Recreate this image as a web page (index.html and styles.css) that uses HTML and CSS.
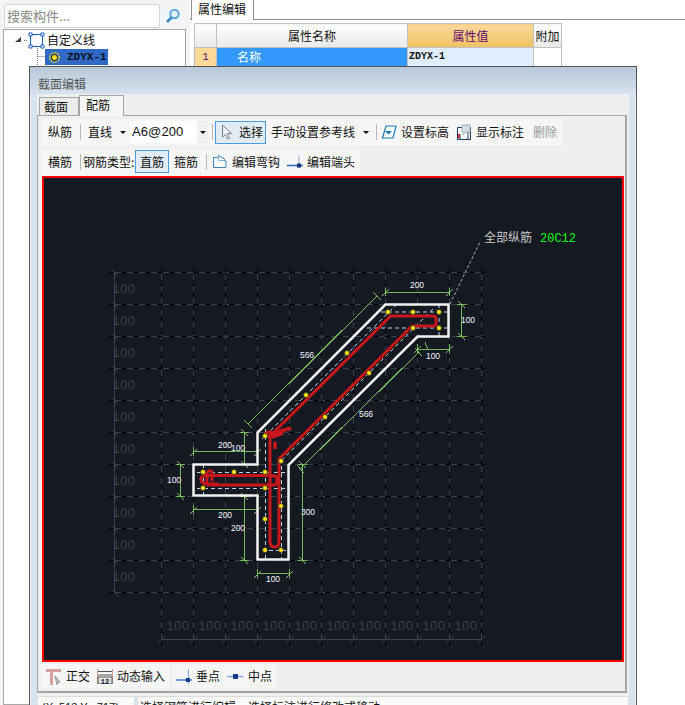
FILE: index.html
```html
<!DOCTYPE html>
<html lang="zh">
<head>
<meta charset="utf-8">
<title>截面编辑</title>
<link rel="stylesheet" href="styles.css">
</head>
<body>
<div class="app">
  <aside class="left">
    <div class="search">
      <div class="search-input">搜索构件...</div>
      <svg class="search-icon" width="16" height="16" viewBox="0 0 16 16"><circle cx="9.5" cy="6" r="4.2" fill="#e4f2fb" stroke="#5ba6d6" stroke-width="2"/><path d="M6.5 9.5L2 14" stroke="#3d8dc4" stroke-width="2.6"/></svg>
    </div>
    <div class="tree">
      <div class="tree-root">
        <svg class="tree-svg" width="44" height="40" viewBox="0 0 44 40">
          <path d="M17 6l-6 5h6z" fill="#444"/>
          <path d="M20 9.500h4M33.500 15v23M33.500 25.500h7" stroke="#777" stroke-dasharray="1 1" fill="none"/>
          <rect x="26.500" y="3.500" width="12" height="12" fill="none" stroke="#1d5fc0"/>
          <path d="M25 2h3v3h-3zM37 2h3v3h-3zM25 14h3v3h-3zM37 14h3v3h-3z" fill="#fff" stroke="#1d5fc0"/>
        </svg>
        <span>自定义线</span>
      </div>
      <div class="tree-item">
        <svg width="11" height="11" viewBox="0 0 11 11"><circle cx="5.500" cy="5.500" r="3" fill="#ffe600" stroke="#222" stroke-width="1"/><circle cx="5.500" cy="5.500" r="4.800" fill="none" stroke="#ffe600" stroke-width="1.300" stroke-dasharray="1.500 1"/></svg>
        <span>ZDYX-1</span>
      </div>
    </div>
  </aside>
  <main class="right">
    <div class="tabbar"><div class="main-tab">属性编辑</div></div>
    <table class="props">
      <colgroup><col class="c1"><col class="c2"><col class="c3"><col class="c4"></colgroup>
      <tr class="head"><th></th><th>属性名称</th><th class="active">属性值</th><th>附加</th></tr>
      <tr class="row"><td class="num">1</td><td class="name">名称</td><td class="val">ZDYX-1</td><td></td></tr>
    </table>
  </main>
</div>

<section class="dialog">
  <div class="title">截面编辑</div>
  <div class="client">
    <div class="tabs">
      <div class="tab">截面</div>
      <div class="tab on">配筋</div>
    </div>
    <div class="pane">
      <div class="tb tb1">
        <span class="t w-a">纵筋</span><i class="sep"></i>
        <span class="t">直线</span><i class="arrow"></i>
        <div class="combo"><span>A6@200</span><b><i class="arrow"></i></b></div>
        <i class="sep s2"></i>
        <div class="btn sel">
          <svg width="12" height="17" viewBox="0 0 12 17"><path d="M1.500 1v12l3-2.500 2 4.500 2-1-2-4.500h4z" fill="#eef1f4" stroke="#7a8088"/></svg>
          <span>选择</span>
        </div>
        <span class="t m5">手动设置参考线</span><i class="arrow a2"></i><i class="sep s3"></i>
        <svg class="ic m4" width="16" height="14" viewBox="0 0 16 14"><path d="M5 1h10l-3 12H1.500z" fill="#fff" stroke="#1c78b8" stroke-width="1.200"/><path d="M4 6h7l-3.500 3.500z" fill="#1c78b8"/></svg>
        <span class="t m4">设置标高</span>
        <svg class="ic m8" width="15" height="16" viewBox="0 0 15 16"><path d="M.500 3.500h13v12H.500z" fill="#fff" stroke="#1d3a5f"/><path d="M5 1h8v7H9l-3 3V8H5z" fill="#d5dde5" stroke="#a9b3bd"/><path d="M3 10v5M11 8v7" stroke="#1d3a5f"/><path d="M1 10h2v4H1z" fill="#d6301f"/></svg>
        <span class="t m4">显示标注</span>
        <span class="t gray">删除</span>
      </div>
      <div class="tb tb2">
        <span class="t w-a">横筋</span><i class="sep"></i>
        <span class="t type">钢筋类型:</span>
        <div class="btn straight"><span>直筋</span></div>
        <span class="t m5">箍筋</span><i class="sep s4"></i>
        <svg class="ic m5" width="15" height="15" viewBox="0 0 15 15"><path d="M1.500 3.500h5v-2l6 3.500v2h1.500v6.500h-12.500z" fill="#fff" stroke="#3e86bb"/><path d="M6.500 1.500v5h6" fill="none" stroke="#7fb2d6"/></svg>
        <span class="t m5">编辑弯钩</span>
        <svg class="ic m7" width="16" height="14" viewBox="0 0 16 14"><path d="M0 10.500h16" stroke="#2f6fc0" stroke-width="1.600"/><path d="M12 0v13" stroke="#8fb2d9"/><rect x="10" y="8.500" width="4" height="4" fill="#18327f"/></svg>
        <span class="t m4">编辑端头</span>
      </div>

      <div class="canvas">
        <svg class="draw" width="578" height="482" viewBox="44 177 578 482">
          <path class="grid" d="M109 271.500H485M109 303.500H485M109 335.500H485M109 367.500H485M109 399.500H485M109 431.500H485M109 463.500H485M109 495.500H485M109 527.500H485M109 559.500H485M109 591.500H485M161.500 267V644M193.500 267V644M225.500 267V644M257.500 267V644M289.500 267V644M321.500 267V644M353.500 267V644M385.500 267V644M417.500 267V644M449.500 267V644M481.500 267V644"/>
          <path class="grid-dash" d="M109 271.500H485M109 303.500H485M109 335.500H485M109 367.500H485M109 399.500H485M109 431.500H485M109 463.500H485M109 495.500H485M109 527.500H485M109 559.500H485M109 591.500H485M161.500 267V644M193.500 267V644M225.500 267V644M257.500 267V644M289.500 267V644M321.500 267V644M353.500 267V644M385.500 267V644M417.500 267V644M449.500 267V644M481.500 267V644"/>
          <path class="axis" d="M114.500 271V591M161 638.500H481M111 268l7 7M111 300l7 7M111 332l7 7M111 364l7 7M111 396l7 7M111 428l7 7M111 460l7 7M111 492l7 7M111 524l7 7M111 556l7 7M111 588l7 7M158 642l7-7M190 642l7-7M222 642l7-7M254 642l7-7M286 642l7-7M318 642l7-7M350 642l7-7M382 642l7-7M414 642l7-7M446 642l7-7M478 642l7-7"/>
          <g class="faint">
            <text x="124" y="292">100</text><text x="124" y="324">100</text><text x="124" y="356">100</text><text x="124" y="388">100</text><text x="124" y="420">100</text><text x="124" y="452">100</text><text x="124" y="484">100</text><text x="124" y="516">100</text><text x="124" y="548">100</text><text x="124" y="580">100</text>
            <text x="178" y="629">100</text><text x="210" y="629">100</text><text x="242" y="629">100</text><text x="274" y="629">100</text><text x="306" y="629">100</text><text x="338" y="629">100</text><text x="370" y="629">100</text><text x="402" y="629">100</text><text x="434" y="629">100</text><text x="466" y="629">100</text>
          </g>

          <path class="leader" d="M450 303L480 241"/>
          <text class="note" x="484" y="241">全部纵筋</text>
          <text class="note-g" x="540" y="241">20C12</text>

          <path class="dim" d="M385.500 291.500H449.500M385.500 287v8M449.500 287v8M382 295l7-7M446 295l7-7
            M461.500 303.500V335.500M457 303.500h9M457 335.500h9M458 300l7 7M458 332l7 7
            M417.500 348.500H449.500M417.500 343v9M449.500 343v9M414 352l7-7M446 352l7-7M425 341l3 8
            M377 295L248 423M373 291l8 8M244 419l8 8
            M419 351L300 468M415 347l7 8M297 464l7 8
            M193.500 450.500H257.500M193.500 446v9M257.500 446v9M190 455l7-7M254 455l7-7
            M244.500 431.500V463.500M240 431.500h9M240 463.500h9M241 428l7 7M241 460l7 7
            M180.500 463.500V495.500M176 463.500h9M176 495.500h9M177 460l7 7M177 492l7 7
            M193.500 508.500H257.500M193.500 504v9M257.500 504v9M190 513l7-7M254 513l7-7
            M244.500 495.500V559.500M240 495.500h9M240 559.500h9M241 492l7 7M241 556l7 7
            M302.500 463.500V559.500M298 463.500h9M298 559.500h9M299 460l7 7M299 556l7 7
            M257.500 572.500H289.500M257.500 568v9M289.500 568v9M254 577l7-7M286 577l7-7"/>
          <g class="dimtxt">
            <text x="417" y="287">200</text><text x="468" y="322">100</text><text x="433" y="358">100</text>
            <text x="307" y="357">566</text><text x="366" y="416">566</text>
            <text x="225" y="447">200</text><text x="238" y="450">100</text><text x="174" y="482">100</text>
            <text x="225" y="517">200</text><text x="238" y="530">200</text><text x="308" y="514">300</text><text x="273" y="581">100</text>
          </g>

          <path class="cover" d="M397 303L262 438M433 308L279 462M381 311H449M367 327H449M439 303V335M265.500 428V559M281.500 458V559M262 549.500H286M197 471.500H290M197 487.500H290M203.500 463V495"/>
          <path class="outline" d="M385.500 303.500H448.500V335.500H417.500L288.500 464V558.500H257.500V494.500H193.500V463.500H257.500V431.500Z"/>
          <path class="rebar" d="M268 437L390.500 315H433Q436 315 436 318V323Q436 325 433 325H412L279 458V540Q279 546 275 546Q270 546 270 540V430
            M203 474.500H273Q277 475 277 479Q277 484 273 484H212Q206 484 202 481Q199 478 203 475
            M207 484V472Q209 468 212 471V480"/>
          <path class="rebar-thick" d="M209 483H218M266 435Q265 431 270 431Q275 432 272 437M272 436L283 432M275 441V448M271 433L291 427"/>
          <g class="pts">
            <circle cx="388" cy="311" r="2.500"/><circle cx="413" cy="311" r="2.500"/><circle cx="439" cy="311" r="2.500"/><circle cx="413" cy="327" r="2.500"/><circle cx="439" cy="327" r="2.500"/><circle cx="347" cy="352" r="2.500"/><circle cx="369" cy="372" r="2.500"/><circle cx="306" cy="394" r="2.500"/><circle cx="325" cy="416" r="2.500"/><circle cx="265" cy="435" r="2.500"/><circle cx="281" cy="460" r="2.500"/><circle cx="203" cy="471" r="2.500"/><circle cx="234" cy="471" r="2.500"/><circle cx="265" cy="471" r="2.500"/><circle cx="203" cy="487" r="2.500"/><circle cx="265" cy="487" r="2.500"/><circle cx="281" cy="505" r="2.500"/><circle cx="265" cy="518" r="2.500"/><circle cx="265" cy="549" r="2.500"/><circle cx="281" cy="549" r="2.500"/>
          </g>
        </svg>
      </div>

      <div class="snap">
        <div class="grp g1">
          <svg class="ic" width="16" height="17" viewBox="0 0 16 17"><path d="M0 1h15v3H7v13H4V4H0z" fill="#d9a0a0"/><path d="M9 8l5 6-2 .500-1 2z" fill="#c4ccd6" stroke="#6b7480" stroke-width=".7"/></svg>
          <span class="t m4">正交</span>
          <svg class="ic m7" width="16" height="15" viewBox="0 0 16 15"><path d="M.500 0v15M15.500 0v15" stroke="#d49a9a"/><path d="M1 2.500h14M1 6h14" stroke="#555"/><rect x="1" y="8" width="14" height="7" fill="#e4e4e4" stroke="#555"/><text class="ic-num" x="8" y="14.500">12</text></svg>
          <span class="t m4">动态输入</span>
        </div>
        <div class="grp g2">
          <svg class="ic" width="16" height="15" viewBox="0 0 16 15"><path d="M0 11h16" stroke="#3f7fd0" stroke-width="1.500"/><path d="M12.500 0v15" stroke="#7fa8d9"/><rect x="10" y="9" width="4" height="4" fill="#163a8c"/></svg>
          <span class="t m4">垂点</span>
          <svg class="ic m7" width="16" height="9" viewBox="0 0 16 9"><path d="M0 4.500h16" stroke="#7fa8d9" stroke-width="1.500"/><rect x="6" y="2" width="5" height="5" fill="#163a8c"/></svg>
          <span class="t mid">中点</span>
        </div>
      </div>
    </div>
    <div class="status">
      <div class="coord">(X: 513 Y: -717)</div>
      <div class="msg">选择钢筋进行编辑，选择标注进行修改或移动;</div>
    </div>
  </div>
</section>
</body>
</html>
```

FILE: styles.css
```css
* { box-sizing: border-box; }
html, body { margin: 0; height: 100%; overflow: hidden; background: #fff; }
body {
  position: relative;
  width: 685px;
  height: 705px;
  font: 12px/16px "Noto Sans CJK SC", "Liberation Sans", sans-serif;
  color: #111;
}
.app { display: flex; height: 705px; }

/* left panel */
.left { width: 190px; flex: none; padding: 3px 3px 0 3px; display: flex; flex-direction: column; background: #f4f4f4; }
.search { height: 26px; display: flex; align-items: center; background: #f2f5f8; padding-left: 1px; }
.search-input { width: 156px; height: 24px; line-height: 22px; padding-left: 2px; background: #fff; border: 1px solid #d5d5d5; border-radius: 2px; color: #888; font-size: 13px; }
.search-icon { margin-left: 5px; }
.tree { flex: 1; width: 183px; background: #fff; border: 1px solid #a8a8a8; position: relative; }
.tree-root { height: 18px; display: flex; align-items: center; margin-top: 1px; }
.tree-svg { position: absolute; left: 0; top: 1px; }
.tree-root span { margin-left: 43px; line-height: 18px; }
.tree-item { margin: 0 0 0 41px; width: 63px; height: 16px; background: #3169c6; display: flex; align-items: center; padding-left: 4px; position: relative; }
.tree-item span { margin-left: 7px; font: 11px/16px "Liberation Mono", monospace; font-weight: 700; color: #0b1020; }

/* right panel */
.right { flex: 1; min-width: 0; background: #fff; }
.tabbar { height: 20px; border-bottom: 1px solid #8f8f8f; padding-left: 1px; }
.main-tab { width: 63px; height: 20px; padding-left: 6px; line-height: 18px; background: #fff; border: 1px solid #8f8f8f; border-top: 0; border-bottom: 0; font-size: 12px; }
.props { margin: 3px 0 0 4px; border-collapse: collapse; table-layout: fixed; width: 367px; border-top: 1px solid #b4b4b4; }
.c1 { width: 22px; } .c2 { width: 191px; } .c3 { width: 126px; } .c4 { width: 28px; }
.props th, .props td { border: 1px solid #c0c0c0; padding: 0; font-weight: 400; }
.head { height: 24px; }
.head th { background: linear-gradient(#fff, #e9e9e9); text-align: center; }
.head th.active { background: linear-gradient(#f9d99b, #f1c263); color: #660a6e; }
.row { height: 19px; }
.num { background: #ffd998; color: #660a6e; text-align: center; font: 11px/16px "Liberation Mono", monospace; }
.props .name { background: #3399ff; color: #fff; padding-left: 20px; }
.props .val { background: #deeeff; font: 700 10px/16px "Liberation Mono", monospace; padding-left: 1px; }

/* dialog */
.dialog {
  position: absolute; left: 29px; top: 66px; width: 608px; height: 660px;
  border: 1px solid #555; background: #d7e3f0; box-shadow: inset 0 0 0 1px #eef3f8;
}
.title { height: 27px; padding: 9px 0 0 8px; line-height: 16px; color: #555; background: linear-gradient(#b7c8d8, #d6e2ef); }
.client { margin: 0 6px 0 7px; width: 592px; background: #efefef; }
.tabs { height: 21px; display: flex; align-items: flex-end; padding-left: 2px; }
.tab { width: 40px; height: 18px; background: #ececec; border: 1px solid #a5a5a5; border-bottom: 0; padding-left: 4px; line-height: 18px; }
.tab.on { width: 45px; height: 21px; padding-left: 6px; background: #f6f6f6; border-color: #a5a5a5; position: relative; z-index: 1; margin-bottom: -1px; }
.pane { width: 590px; height: 578px; border: 2px solid #a5a5a5; border-width: 1px 2px 2px 1px; padding: 3px 0 0 3px; }

.tb { display: flex; align-items: center; background: #f6f6f6; border-radius: 2px; padding-left: 7px; }
.tb1 { width: 522px; height: 27px; padding-bottom: 1px; }
.tb2 { width: 319px; height: 27px; margin-top: 3px; padding-top: 1px; padding-bottom: 3px; }
.t { white-space: nowrap; flex: none; }
.w-a { width: 24px; }
.sep { width: 1px; height: 16px; background: #b8b8b8; margin: 0 7px 0 8px; flex: none; }
.arrow { width: 0; height: 0; border: 3px solid transparent; border-top: 3px solid #111; border-bottom: 0; margin-left: 8px; flex: none; display: block; }
.combo { width: 78px; height: 22px; background: #fff; margin-left: 4px; display: flex; justify-content: space-between; align-items: center; padding-left: 2px; font: 13px/22px "Liberation Sans", sans-serif; letter-spacing: .1px; }
.combo b { width: 11px; height: 22px; background: #f0f0f0; display: flex; align-items: center; }
.combo .arrow { margin-left: 3px; }
.s2 { margin: 0 2px 0 4px; }
.btn { height: 23px; border: 1px solid #4b9be0; background: #e2ecf5; display: flex; align-items: center; flex: none; }
.sel { width: 51px; padding-left: 5px; }
.sel span { margin-left: 6px; }
.straight { width: 34px; justify-content: center; margin-left: 2px; }
.type { margin-left: -5px; width: 50px; }
.m4 { margin-left: 4px; } .m5 { margin-left: 5px; } .m6 { margin-left: 6px; } .m7 { margin-left: 7px; } .m8 { margin-left: 8px; }
.a2 { margin-left: 8px; }
.s3 { margin: 0 0 0 7px; }
.s4 { margin: 0 0 0 8px; }
.ic { flex: none; display: block; }
.gray { color: #9a9a9a; margin-left: 9px; }

.canvas { width: 582px; height: 486px; margin-left: 1px; border: 2px solid #f00; background: #151922; }
.draw { display: block; }
.grid { stroke: #3a404b; stroke-width: 1; fill: none; shape-rendering: crispEdges; }
.grid-dash { stroke: #000; stroke-width: 1; fill: none; stroke-dasharray: 6 6; shape-rendering: crispEdges; }
.axis { stroke: #3c434e; stroke-width: 1; fill: none; }
.faint text { fill: #3a404a; font: 13px "Liberation Sans", sans-serif; letter-spacing: .5px; text-anchor: middle; }
.leader { stroke: #a8a8a8; stroke-dasharray: 3 2; fill: none; }
.note { fill: #c9c9c9; font: 12px "Noto Sans CJK SC", sans-serif; }
.note-g { fill: #00ff00; font: 12px "Liberation Mono", monospace; }
.dim { stroke: #78b85c; stroke-width: 1; fill: none; shape-rendering: crispEdges; }
.dimtxt text { fill: #eef4ff; font: 8.500px "Liberation Sans", sans-serif; text-anchor: middle; }
.cover { stroke: #bcd4ea; stroke-dasharray: 4 3; fill: none; stroke-width: 1; }
.outline { stroke: #f2f2f2; stroke-width: 2.500; fill: none; }
.rebar { stroke: #c8161d; stroke-width: 3; fill: none; stroke-linejoin: round; }
.rebar-thick { stroke: #c8161d; stroke-width: 3.500; fill: none; }
.pts circle { fill: #ffe21a; stroke: #2a2a1a; stroke-width: .7; }

.snap { display: flex; margin: 2px 0 0 0; height: 25px; }
.grp { display: flex; align-items: center; background: #f6f6f6; border-radius: 2px; padding-left: 5px; padding-bottom: 1px; flex: none; }
.g1 { width: 129px; }
.g2 { width: 104px; margin-left: 2px; padding-left: 4px; }
.mid { margin-left: 5px; }
.ic-num { font: 700 7px "Liberation Mono", monospace; text-anchor: middle; fill: #111; }

.status { display: flex; gap: 2px; margin-top: 3px; height: 40px; background: #d7e3f0; }
.coord { width: 98px; height: 40px; background: #fafafa; border: 1px solid #dcdcdc; padding: 2px 0 0 4px; font: 11px/16px "Liberation Sans", sans-serif; white-space: nowrap; overflow: hidden; }
.msg { flex: 1; height: 40px; background: #fafafa; border: 1px solid #dcdcdc; padding: 2px 0 0 2px; line-height: 16px; }
```
